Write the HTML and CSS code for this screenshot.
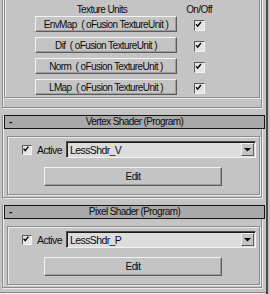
FILE: index.html
```html
<!DOCTYPE html>
<html lang="en">

<head>
  <meta charset="UTF-8">
  <title>oFusion Material</title>
  <link rel="stylesheet" href="styles.css">
</head>

<body>
  <div class="panel">

    <div class="rollout first">
      <div class="group units">
        <div class="units_head">
          <div class="col_name">Texture Units</div>
          <div class="col_on">On/Off</div>
        </div>
        <div class="units_rows">
          <button class="btn">EnvMap &nbsp;( oFusion TextureUnit )</button>
          <span class="check big"><svg viewBox="0 0 11 11"><path d="M2.5 5 L4.5 7.5 L8.5 2.5" /></svg></span>
          <button class="btn">Dif &nbsp;( oFusion TextureUnit )</button>
          <span class="check big"><svg viewBox="0 0 11 11"><path d="M2.5 5 L4.5 7.5 L8.5 2.5" /></svg></span>
          <button class="btn">Norm &nbsp;( oFusion TextureUnit )</button>
          <span class="check big"><svg viewBox="0 0 11 11"><path d="M2.5 5 L4.5 7.5 L8.5 2.5" /></svg></span>
          <button class="btn">LMap &nbsp;( oFusion TextureUnit )</button>
          <span class="check big"><svg viewBox="0 0 11 11"><path d="M2.5 5 L4.5 7.5 L8.5 2.5" /></svg></span>
        </div>
      </div>
    </div>

    <div class="rollout">
      <div class="roll_head"><span class="minus">-</span><span class="roll_title">Vertex Shader (Program)</span></div>
      <div class="group shader">
        <div class="shader_row">
          <span class="check"><svg viewBox="0 0 10 10"><path d="M2 4.5 L4 7 L8 2" /></svg></span>
          <span class="label">Active</span>
          <div class="combo">
            <span class="combo_text">LessShdr_V</span>
            <span class="combo_btn"><svg viewBox="0 0 11 11"><path d="M2 4 H9 L5.5 7.5 Z" /></svg></span>
          </div>
        </div>
        <button class="btn edit">Edit</button>
      </div>
    </div>

    <div class="rollout">
      <div class="roll_head"><span class="minus">-</span><span class="roll_title">Pixel Shader (Program)</span></div>
      <div class="group shader">
        <div class="shader_row">
          <span class="check"><svg viewBox="0 0 10 10"><path d="M2 4.5 L4 7 L8 2" /></svg></span>
          <span class="label">Active</span>
          <div class="combo">
            <span class="combo_text">LessShdr_P</span>
            <span class="combo_btn"><svg viewBox="0 0 11 11"><path d="M2 4 H9 L5.5 7.5 Z" /></svg></span>
          </div>
        </div>
        <button class="btn edit">Edit</button>
      </div>
    </div>

    <div class="next_line"></div>
  </div>
</body>

</html>
```

FILE: styles.css
```css
html,
body {
  width: 100%;
  height: 100%;
  overflow: hidden;
}

body {
  margin: 0;
  background-color: #c4c4c4;
  color: #0c0c0c;
  font-family: 'Liberation Sans', Arial, sans-serif;
  font-size: 10px;
  letter-spacing: -0.6px;
  white-space: nowrap;
}

.panel {
  width: 266px;
  height: 294px;
  border-right: 2px solid #4c4c4c;
  overflow: hidden;
}

/* rollout frame */
.rollout {
  margin: 4px 0 0 2px;
  width: 260px;
  box-sizing: border-box;
  border: 1px solid #8c8c8c;
  border-top: none;
  box-shadow: 1px 1px 0 #ececec, inset 1px 0 0 #ececec;
  padding-bottom: 2px;
}

.rollout.first {
  margin-top: -4px;
  padding-bottom: 9px;
}

.rollout + .rollout {
  margin-top: 7px;
}

.roll_head {
  display: flex;
  align-items: center;
  height: 14px;
  box-sizing: border-box;
  margin: 0 -4px 0 1px;
  border: 1px solid #161616;
  background-color: #a9a9a9;
  line-height: 12px;
}

.minus {
  width: 14px;
  padding-left: 4px;
  box-sizing: border-box;
  font-weight: bold;
}

.roll_title {
  flex: 1;
  text-align: center;
  margin-right: 14px;
}

/* etched group box */
.group {
  border: 1px solid #8c8c8c;
  box-shadow: 1px 1px 0 #ececec, inset 1px 1px 0 #ececec;
}

.units {
  margin: 0 1px;
  padding: 6px 0 2px 30px;
}

.units_head {
  display: flex;
  height: 13px;
  line-height: 13px;
}

.col_name {
  width: 142px;
  text-align: center;
  margin-left: -4px;
}

.col_on {
  width: 52px;
  text-align: center;
}

.units_rows {
  display: grid;
  grid-template-columns: 142px 44px;
  grid-auto-rows: 16px;
  row-gap: 5px;
  align-items: center;
  justify-items: center;
}

.btn {
  display: block;
  width: 100%;
  height: 100%;
  box-sizing: border-box;
  padding: 0;
  border: 1px solid;
  border-color: #f2f2f2 #5c5c5c #5c5c5c #f2f2f2;
  box-shadow: inset -1px -1px 0 #9c9c9c;
  background-color: #c4c4c4;
  color: #0c0c0c;
  font-family: inherit;
  font-size: 10px;
  letter-spacing: -0.6px;
  line-height: 13px;
  white-space: nowrap;
}

.check {
  display: block;
  width: 10px;
  height: 10px;
  box-sizing: border-box;
  border: 1px solid;
  border-color: #5a5a5a #f2f2f2 #f2f2f2 #5a5a5a;
  background-color: #e4e4e4;
}

.check.big {
  width: 11px;
  height: 11px;
  margin-top: 2px;
}

.check svg {
  display: block;
  width: 100%;
  height: 100%;
  margin: -1px;
}

.check path {
  fill: none;
  stroke: #000;
  stroke-width: 1.7;
}

.shader {
  margin: 7px 1px 0 4px;
  padding: 4px 3px 8px 14px;
}

.shader_row {
  display: flex;
  align-items: center;
  height: 17px;
}

.label {
  width: 34px;
  padding-left: 5px;
  box-sizing: border-box;
  font-size: 10.5px;
}

.combo {
  flex: 1;
  display: flex;
  align-items: center;
  height: 17px;
  box-sizing: border-box;
  border: 1px solid;
  border-color: #4a4a4a #f2f2f2 #f2f2f2 #4a4a4a;
  box-shadow: inset 1px 1px 0 #1c1c1c;
  background-color: #dcdcdc;
}

.combo_text {
  flex: 1;
  padding-left: 3px;
  font-size: 10.5px;
}

.combo_btn {
  display: block;
  width: 13px;
  height: 13px;
  margin-right: 1px;
  box-sizing: border-box;
  border: 1px solid;
  border-color: #f2f2f2 #5c5c5c #5c5c5c #f2f2f2;
  background-color: #c4c4c4;
}

.combo_btn svg {
  display: block;
  width: 11px;
  height: 11px;
}

.combo_btn path {
  fill: #000;
}

.edit {
  width: 178px;
  height: 19px;
  margin: 9px auto 0 22px;
}

.next_line {
  margin-top: 4px;
  height: 1px;
  background-color: #8c8c8c;
  box-shadow: 0 1px 0 #ececec;
}
```
